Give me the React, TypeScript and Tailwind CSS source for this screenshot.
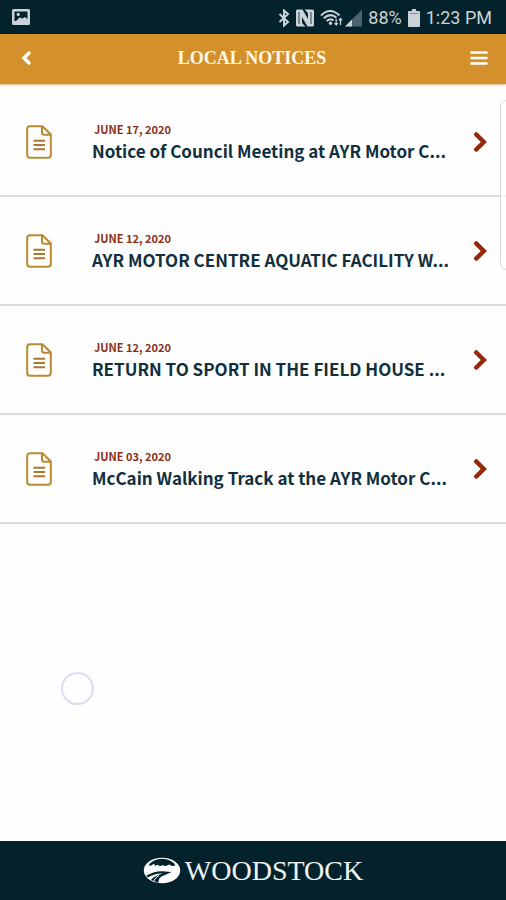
type Notice = { id: number; date: string; title: string };

const notices: Notice[] = [
  { id: 1, date: "JUNE 17, 2020", title: "Notice of Council Meeting at AYR Motor C..." },
  { id: 2, date: "JUNE 12, 2020", title: "AYR MOTOR CENTRE AQUATIC FACILITY W..." },
  { id: 3, date: "JUNE 12, 2020", title: "RETURN TO SPORT IN THE FIELD HOUSE ..." },
  { id: 4, date: "JUNE 03, 2020", title: "McCain Walking Track at the AYR Motor C..." },
];

function PictureIcon() {
  return (
    <svg className="h-4 w-[18px]" viewBox="0 0 18 16" aria-hidden="true">
      <rect width="18" height="16" rx="1.5" fill="#c9d3d8" />
      <path d="M2.5 2.5h13v7.500l-2.500-2-2.500 1.500-3-1-3.500 3.500h-1.500z" fill="#04222c" />
      <circle cx="6.200" cy="5.400" r="1.600" fill="#c9d3d8" />
    </svg>
  );
}

function BluetoothIcon() {
  return (
    <svg className="h-[18px] w-3" viewBox="0 0 12 18" fill="none" stroke="#c9d3d8" strokeWidth="2" aria-hidden="true">
      <path d="M1.500 5l8.500 8-4 3.500v-15l4 3.500-8.500 8" />
    </svg>
  );
}

function NfcIcon() {
  return (
    <svg className="h-[18px] w-[18px]" viewBox="0 0 18 18" aria-hidden="true">
      <path d="M0 2Q0 .5 1.500 .5H6.500L12 10V5Q12 3.500 10.500 2.500L8.500 .5H16.500Q18 .5 18 2V16Q18 17.500 16.500 17.500H11.500L6 8v5q0 1.500 1.500 2.500l2 2H1.500Q0 17.500 0 16z" fill="#c9d3d8" />
      <path d="M3 3v12M15 3v12" stroke="#04222c" strokeWidth=".8" />
    </svg>
  );
}

function WifiIcon() {
  return (
    <svg className="h-[18px] w-6" viewBox="0 0 24 18" fill="none" stroke="#c9d3d8" strokeWidth="2" aria-hidden="true">
      <path d="M1 6.500Q10-2.500 19.500 6.500M3.800 9.300q6.500-6 12.700-.5M6.600 12q3.800-3.300 7 -.5" />
      <circle cx="10.500" cy="14.300" r="1.700" fill="#c9d3d8" stroke="none" />
      <path d="M16.200 10v6M20.500 16V9" strokeWidth="1.300" />
      <path d="M14 14h4.400l-2.200 3zM18.200 11.500h4.600l-2.300-3z" fill="#c9d3d8" stroke="none" />
    </svg>
  );
}

function SignalIcon() {
  return (
    <svg className="h-[18px] w-[17px]" viewBox="0 0 17 18" aria-hidden="true">
      <path d="M0 17.500L17 .5v17z" fill="#4b636c" />
      <path d="M0 17.500l7-7v7z" fill="#c9d3d8" />
    </svg>
  );
}

function BatteryIcon() {
  return (
    <svg className="h-[18px] w-3" viewBox="0 0 12 18" aria-hidden="true">
      <path d="M4 0h4v2h3q1 0 1 1v14q0 1-1 1H1q-1 0-1-1V3q0-1 1-1h3z" fill="#c9d3d8" />
      <path d="M1.500 4.500h9" stroke="#7e9098" />
    </svg>
  );
}

function DocumentIcon() {
  return (
    <svg className="h-[34px] w-[26px]" viewBox="0 0 26 34" fill="none" stroke="#b98a30" strokeWidth="2" aria-hidden="true">
      <path d="M4 1.200h12.500L24.800 9.500V30q0 2.800-2.800 2.800H4Q1.200 32.800 1.200 30V4Q1.200 1.200 4 1.200z" />
      <path d="M16 1.500V7.500q0 2.300 2.300 2.300h6.200" />
      <path d="M7.500 15.700h11.500M7.500 20h11.500M7.500 24.300h11.500" stroke="#a9782c" />
    </svg>
  );
}

function ChevronRight() {
  return (
    <svg className="h-5 w-[13px]" viewBox="0 0 13 20" fill="none" stroke="#93290b" strokeWidth="4.500" aria-hidden="true">
      <path d="M2.300 2.500l7.500 7.500-7.500 7.500" strokeLinecap="round" />
    </svg>
  );
}

function TownLogo() {
  return (
    <svg className="h-[27px] w-[38px]" viewBox="0 0 38 27" aria-hidden="true">
      <ellipse cx="19" cy="13.500" rx="18.200" ry="12.700" fill="#fff" />
      <path d="M5.500 8.500Q10 1.800 19 1.800T32.500 8.500L29 9l-3-1.500-3 1.500-4-.7-2 1-2.500-1.500-2 1-2-2-2 1.800z" fill="#04222c" />
      <path d="M28.500 15Q24 17.300 19.500 19Q15 21 15.500 26L8 23Q11 18.500 20 16.500Q13 15.800 4.500 20.500L3.500 18.500Q12 13.800 20 14.300Q25 14.800 28.500 15z" fill="#04222c" />
      <path d="M10.500 24.500q2-4.500 5.500-6" stroke="#fff" fill="none" />
    </svg>
  );
}

export default function App() {
  return (
    <div className="relative flex min-h-screen flex-col overflow-hidden bg-[#fefefe] font-['Noto_Sans_CJK_SC',sans-serif]">
      <div className="flex h-[34px] items-center justify-between border-b border-[#020a18] bg-[#04222c] px-3 font-['Roboto',sans-serif] text-lg text-[#c9d3d8]">
        <PictureIcon />
        <div className="flex items-center pt-0.5 pr-0.5">
          <BluetoothIcon />
          <span className="ml-1.5"><NfcIcon /></span>
          <span className="ml-1.5"><WifiIcon /></span>
          <span className="ml-px"><SignalIcon /></span>
          <span className="ml-1.5 leading-5">88%</span>
          <span className="ml-1.5"><BatteryIcon /></span>
          <span className="ml-1.5 leading-5">1:23 PM</span>
        </div>
      </div>

      <header className="flex h-[50px] items-center justify-between bg-[#d4912b] px-[18px] pb-0.5 shadow-[0_1px_2px_#d9b67c]">
        <button type="button" aria-label="Back" className="flex w-4 justify-center">
          <svg className="h-4 w-3" viewBox="0 0 12 16" fill="none" stroke="#fff" strokeWidth="3.500" aria-hidden="true">
            <path d="M9 3L4 8l5 5" strokeLinecap="round" />
          </svg>
        </button>
        <h1 className="font-['Liberation_Serif',serif] text-lg font-bold text-[#fff8e6]">LOCAL NOTICES</h1>
        <button type="button" aria-label="Menu" className="flex w-[18px] justify-center">
          <svg className="h-4 w-[18px]" viewBox="0 0 18 16" stroke="#fff" strokeWidth="2.600" strokeLinecap="round" aria-hidden="true">
            <path d="M1.500 2.500h15M1.500 8h15M1.500 13.500h15" />
          </svg>
        </button>
      </header>

      <main className="flex-1 pt-1">
        <ul>
          {notices.map((notice) => (
            <li key={notice.id} className="border-b-2 border-[#dcdcdc]">
              <a href={`#notice-${notice.id}`} className="flex h-[107px] items-center pr-[19px] pl-[26px]">
                <DocumentIcon />
                <div className="ml-10 min-w-0 flex-1 pt-0.5">
                  <p className="pl-0.5 text-[11px] leading-4 font-bold text-[#8a2f16]">{notice.date}</p>
                  <p className="text-[17px] leading-7 font-bold whitespace-nowrap text-[#112f3d]">{notice.title}</p>
                </div>
                <ChevronRight />
              </a>
            </li>
          ))}
        </ul>
      </main>

      <footer className="flex h-[59px] items-center justify-center gap-1 bg-[#04222c]">
        <TownLogo />
        <span className="font-['Liberation_Serif',serif] text-[28px] leading-8 text-[#eef3f4]">WOODSTOCK</span>
      </footer>

      <div className="absolute top-[100px] -right-2 h-[170px] w-3.5 rounded-lg border border-[#d8d8dc] bg-white/60" />
      <div className="absolute top-[672px] left-[61px] h-[33px] w-[33px] rounded-full border-2 border-[#dcdcf0]" />
    </div>
  );
}
